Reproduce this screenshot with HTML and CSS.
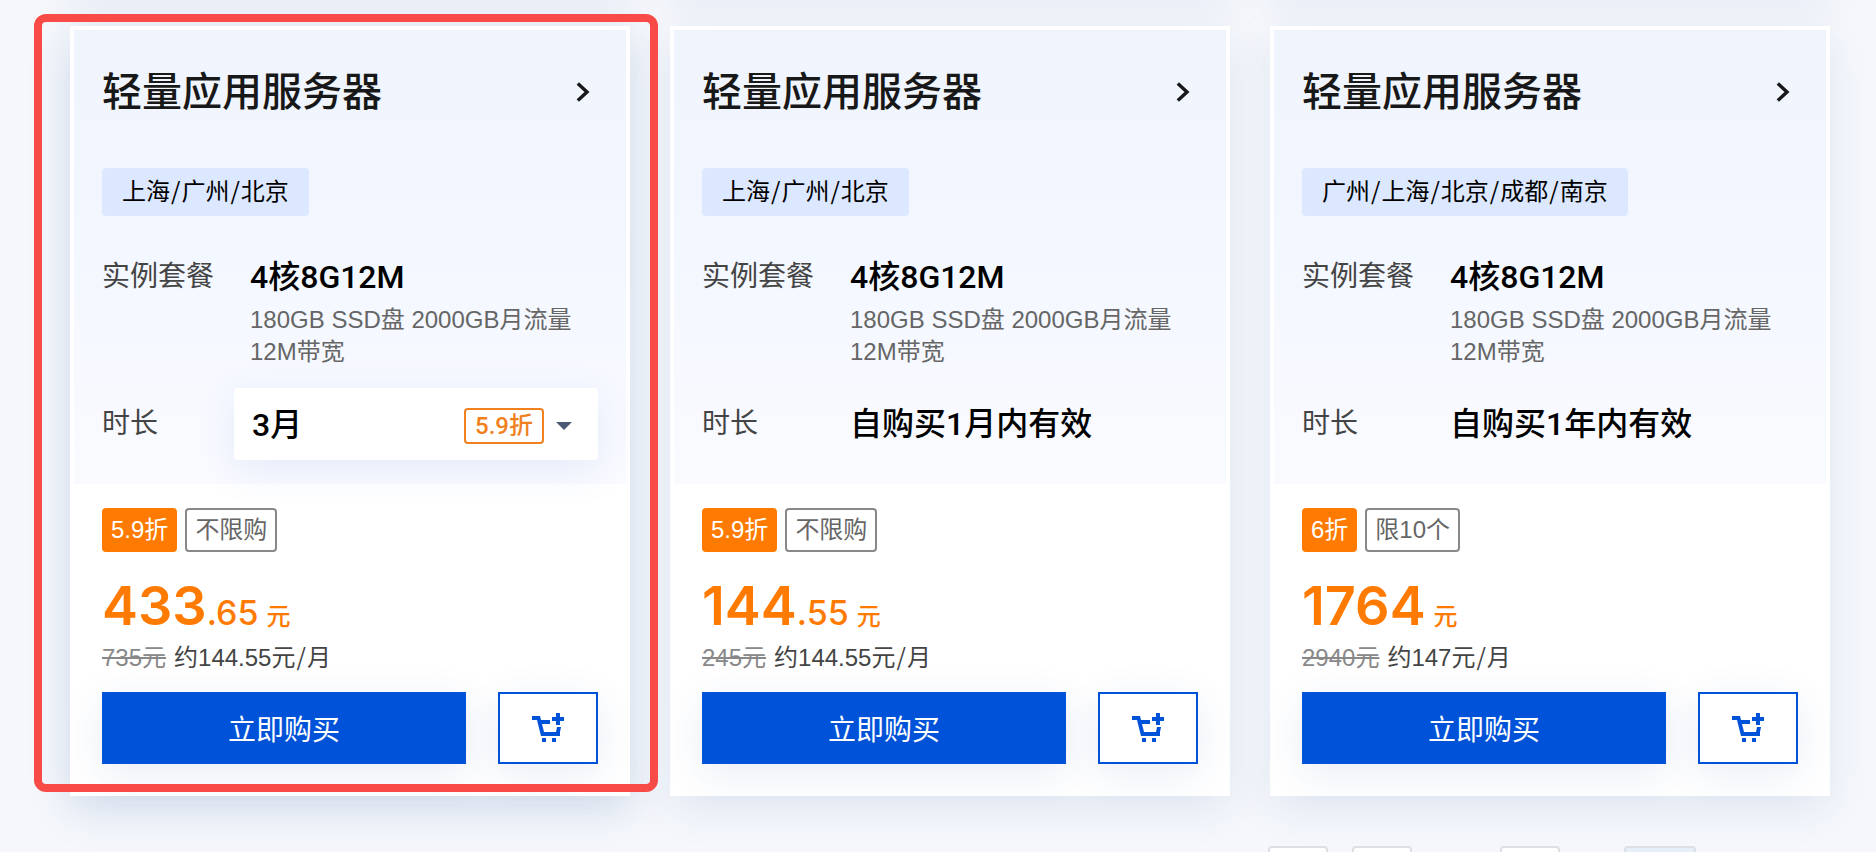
FILE: index.html
```html
<!DOCTYPE html>
<html lang="zh-CN">
<head>
<meta charset="utf-8">
<title>轻量应用服务器</title>
<link rel="stylesheet" href="styles.css">
</head>
<body>
<svg class="defs" aria-hidden="true">
  <symbol id="arrow" viewBox="0 0 14 20"><path d="M1.8 1.5 11 10 1.8 18.500" fill="none" stroke="currentColor" stroke-width="3.400"/></symbol>
  <symbol id="cart" viewBox="0 0 32 30">
    <path fill="currentColor" d="M0 3h8l1 4h9v4H10l2 8h12l1-5h4l-1 5v4H9L5 7H0zM10 25h4v4h-4zM20 25h4v4h-4zM24 0h4v4h4v4h-4v4h-4V8h-4V4h4z"/>
  </symbol>
</svg>
<main class="page">
  <div class="previous-row" aria-hidden="true"><div></div><div></div><div></div></div>
  <section class="cards">
    <article class="card card-active">
      <div class="config">
        <header class="card-head">
          <h2>轻量应用服务器</h2>
          <a class="more" href="#" aria-label="查看详情"><svg><use href="#arrow"/></svg></a>
        </header>
        <p class="region">上海<i>/</i>广州<i>/</i>北京</p>
        <div class="row">
          <span class="label">实例套餐</span>
          <div class="value"><strong>4核8G12M</strong><p class="desc">180GB SSD盘 2000GB月流量 12M带宽</p></div>
        </div>
        <div class="row duration">
          <label class="label" for="term">时长</label>
          <div class="select-wrap">
            <select id="term"><option>3月</option></select>
            <span class="select-extra"><span class="off">5.9折</span><span class="caret"></span></span>
          </div>
        </div>
      </div>
      <div class="purchase">
        <div class="tags"><span class="tag tag-fill">5.9折</span><span class="tag">不限购</span></div>
        <p class="price"><b>433</b><span class="cents">.65</span><span class="unit">元</span></p>
        <p class="origin"><del>735元</del><span>约144.55元<i>/</i>月</span></p>
        <div class="actions">
          <button class="buy" type="button">立即购买</button>
          <button class="add" type="button" aria-label="加入购物车"><svg><use href="#cart"/></svg></button>
        </div>
      </div>
      <div class="marker"></div>
    </article>
    <article class="card">
      <div class="config">
        <header class="card-head">
          <h2>轻量应用服务器</h2>
          <a class="more" href="#" aria-label="查看详情"><svg><use href="#arrow"/></svg></a>
        </header>
        <p class="region">上海<i>/</i>广州<i>/</i>北京</p>
        <div class="row">
          <span class="label">实例套餐</span>
          <div class="value"><strong>4核8G12M</strong><p class="desc">180GB SSD盘 2000GB月流量 12M带宽</p></div>
        </div>
        <div class="row duration">
          <span class="label">时长</span>
          <div class="value"><strong>自购买1月内有效</strong></div>
        </div>
      </div>
      <div class="purchase">
        <div class="tags"><span class="tag tag-fill">5.9折</span><span class="tag">不限购</span></div>
        <p class="price"><b>144</b><span class="cents">.55</span><span class="unit">元</span></p>
        <p class="origin"><del>245元</del><span>约144.55元<i>/</i>月</span></p>
        <div class="actions">
          <button class="buy" type="button">立即购买</button>
          <button class="add" type="button" aria-label="加入购物车"><svg><use href="#cart"/></svg></button>
        </div>
      </div>
    </article>
    <article class="card">
      <div class="config">
        <header class="card-head">
          <h2>轻量应用服务器</h2>
          <a class="more" href="#" aria-label="查看详情"><svg><use href="#arrow"/></svg></a>
        </header>
        <p class="region">广州<i>/</i>上海<i>/</i>北京<i>/</i>成都<i>/</i>南京</p>
        <div class="row">
          <span class="label">实例套餐</span>
          <div class="value"><strong>4核8G12M</strong><p class="desc">180GB SSD盘 2000GB月流量 12M带宽</p></div>
        </div>
        <div class="row duration">
          <span class="label">时长</span>
          <div class="value"><strong>自购买1年内有效</strong></div>
        </div>
      </div>
      <div class="purchase">
        <div class="tags"><span class="tag tag-fill">6折</span><span class="tag">限10个</span></div>
        <p class="price"><b>1764</b><span class="unit">元</span></p>
        <p class="origin"><del>2940元</del><span>约147元<i>/</i>月</span></p>
        <div class="actions">
          <button class="buy" type="button">立即购买</button>
          <button class="add" type="button" aria-label="加入购物车"><svg><use href="#cart"/></svg></button>
        </div>
      </div>
    </article>
  </section>
  <nav class="pager" aria-label="分页">
    <button type="button" aria-label="首页"></button>
    <button type="button" aria-label="上一页"></button>
    <input type="text" aria-label="页码">
    <button class="go" type="button" aria-label="跳转"></button>
  </nav>
</main>
</body>
</html>
```
FILE: styles.css
```css
* { box-sizing: border-box; }

body, h2, p { margin: 0; }

body {
  background: #f5f7fb;
  color: #000;
  font-family: "Liberation Sans", "Noto Sans CJK SC", sans-serif;
  font-size: 24px;
}

button, select, input { font: inherit; }
i { margin: 0 1px; font-family: "Noto Sans CJK SC", sans-serif; font-style: normal; line-height: 1; }

.defs { position: absolute; width: 0; height: 0; }

.page {
  height: 100vh;
  overflow: hidden;
}

.previous-row, .cards {
  display: grid;
  grid-template-columns: repeat(3, 1fr);
  gap: 40px;
  padding: 0 46px 0 70px;
}

.previous-row { height: 60px; margin: -64px 0 30px; }

.previous-row div {
  background: #fff;
  box-shadow: 0 8px 40px rgba(30, 80, 170, .08);
}

.card {
  position: relative;
  background: #fff;
  border: 4px solid #fff;
  box-shadow: 0 12px 40px rgba(40, 90, 160, .1);
}

.card-active {
  z-index: 1;
  box-shadow: 0 12px 40px rgba(40, 90, 160, .18);
}

.config {
  height: 454px;
  padding: 34px 28px 0;
  background: linear-gradient(#eff4fd, #f3f7ff 50%, #fafbff);
}

.card-head {
  display: flex;
  align-items: center;
  justify-content: space-between;
  height: 56px;
  margin-bottom: 48px;
  color: #181818;
}

h2 { font-size: 40px; font-weight: 500; line-height: 56px; }

.more { display: flex; padding-right: 8px; color: #181818; }
.more svg { width: 14px; height: 20px; }

.region {
  width: fit-content;
  padding: 0 20px;
  margin-bottom: 40px;
  border-radius: 4px;
  background: #dce8ff;
  line-height: 48px;
}

.row { display: flex; align-items: flex-start; }

.label {
  flex: 0 0 148px;
  color: #444;
  font-size: 28px;
  line-height: 42px;
}

.value { flex: 1; }
strong, select, .off { font-family: Roboto, "Noto Sans CJK SC", sans-serif; }
strong { display: block; font-size: 32px; font-weight: 500; line-height: 42px; }
.desc { margin-top: 6px; padding-right: 20px; color: #666; line-height: 32px; }

.duration { height: 72px; margin-top: 20px; align-items: center; }

.select-wrap { position: relative; flex: 1; margin-left: -16px; }

select {
  display: block;
  width: 100%;
  height: 72px;
  padding: 2px 18px 0;
  border: 0;
  border-radius: 4px;
  background: #fff;
  box-shadow: 0 10px 40px rgba(40, 90, 200, .1);
  color: #000;
  font-size: 32px;
  font-weight: 500;
  appearance: none;
}

.select-extra {
  position: absolute;
  top: 20px;
  right: 26px;
  display: flex;
  align-items: center;
  gap: 12px;
  pointer-events: none;
}

.off {
  padding: 0 9px;
  border: 2px solid #f08020;
  border-radius: 4px;
  color: #f08020;
  font-weight: 500;
  line-height: 32px;
}

.caret {
  border: 8px solid transparent;
  border-top-color: #4b5b76;
  border-bottom: 0;
}

.purchase { padding: 24px 28px 28px; }

.tags { display: flex; gap: 8px; }

.tag {
  padding: 0 8px;
  border: 2px solid #888;
  border-radius: 4px;
  color: #666;
  line-height: 40px;
}

.tag-fill { padding: 0 7px; border-color: #ff7a00; background: #ff7a00; color: #fff; }

.price {
  height: 72px;
  margin-top: 16px;
  color: #ff7a00;
  font-family: Inter, "Noto Sans CJK SC", sans-serif;
  font-weight: 500;
  line-height: 76px;
  white-space: nowrap;
}

.price b { font-size: 54px; font-weight: 600; }
.cents { font-size: 34px; }
.unit { margin-left: 8px; }

.origin {
  display: flex;
  gap: 8px;
  margin: 2px 0 18px;
  color: #444;
  line-height: 32px;
}

del { color: #888; }

.actions { display: flex; gap: 32px; }

.buy, .add {
  height: 72px;
  padding: 0;
  box-shadow: 0 10px 40px rgba(40, 80, 160, .1);
}

.buy { flex: 1; border: 0; background: #0052d9; color: #fff; font-size: 28px; }

.add {
  display: flex;
  align-items: center;
  justify-content: center;
  flex: 0 0 100px;
  border: 2px solid #0052d9;
  background: #fff;
  color: #0052d9;
}

.add svg { width: 32px; height: 30px; }

.marker {
  position: absolute;
  inset: -16px -32px 0 -40px;
  border: 8px solid #f84b48;
  border-radius: 12px;
  pointer-events: none;
}

.pager {
  display: flex;
  justify-content: flex-end;
  gap: 24px;
  margin-top: 50px;
  padding-right: 180px;
}

.pager button, .pager input {
  width: 60px;
  height: 60px;
  padding: 0;
  border: 2px solid #dcdfe6;
  border-radius: 4px;
  background: #fff;
}

.pager input { margin-left: 64px; }
.pager .go { width: 72px; margin-left: 40px; background: #e6eefa; }
```
